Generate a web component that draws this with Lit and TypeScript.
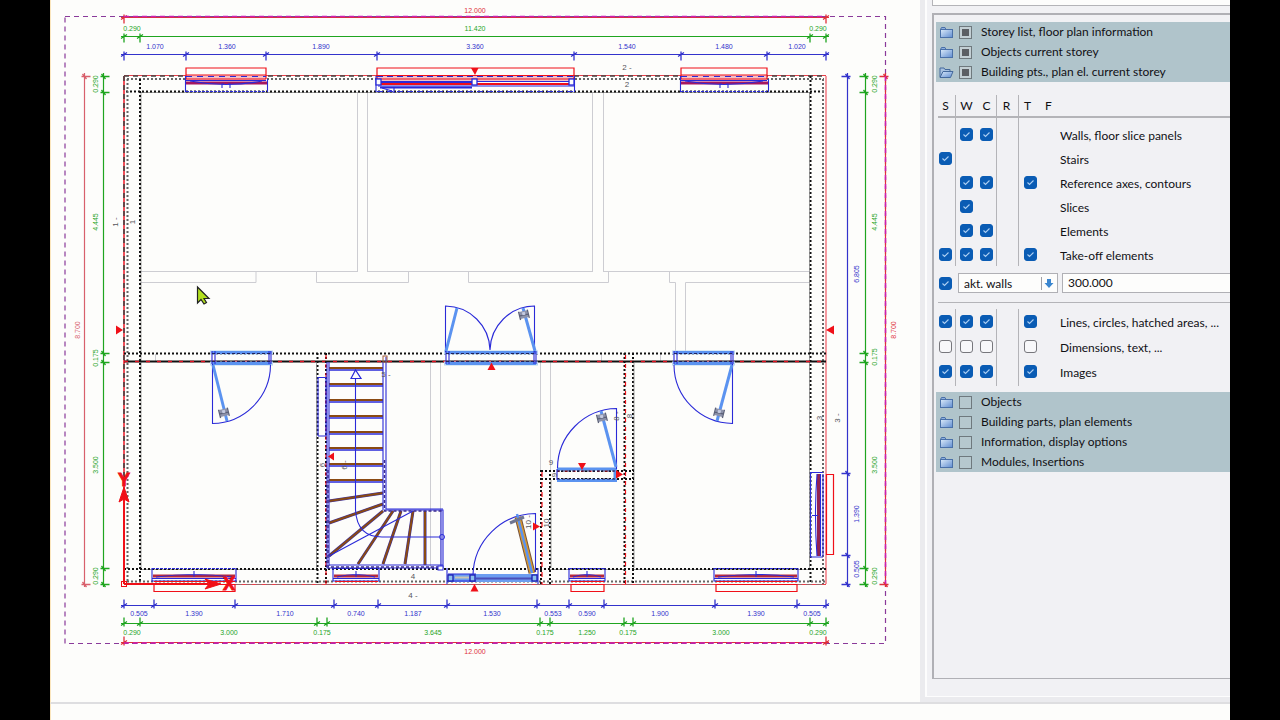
import { LitElement, html, svg, css, nothing } from "lit";
import { customElement } from "lit/decorators.js";

const GREEN = "#1fa51f";
const BLUE = "#3333cc";
const RED = "#e0303a";

type Label = [string, number, number];
interface DimChain {
  axis: "h" | "v";
  at: number;
  color: string;
  ticks: number[];
  side: number;
  labels: Label[];
}

const chains: DimChain[] = [
  { axis: "h", at: 17, color: RED, ticks: [124, 826], side: 1, labels: [["12.000", 475, 10]] },
  { axis: "h", at: 36, color: GREEN, ticks: [124, 140, 810, 826], side: 1,
    labels: [["0.290", 132, 28], ["11.420", 475, 28], ["0.290", 818, 28]] },
  { axis: "h", at: 54, color: BLUE, ticks: [124, 186, 266, 377, 574, 681, 767, 826], side: 1,
    labels: [["1.070", 155, 46], ["1.360", 227, 46], ["1.890", 321, 46], ["3.360", 475, 46],
      ["1.540", 627, 46], ["1.480", 724, 46], ["1.020", 797, 46]] },
  { axis: "h", at: 605, color: BLUE, side: -1,
    ticks: [124, 154, 235, 334, 378, 447, 537, 569, 604, 715, 797, 826],
    labels: [["0.505", 139, 613], ["1.390", 194, 613], ["1.710", 285, 613], ["0.740", 356, 613],
      ["1.187", 413, 613], ["1.530", 492, 613], ["0.553", 553, 613], ["0.590", 587, 613],
      ["1.900", 660, 613], ["1.390", 756, 613], ["0.505", 812, 613]] },
  { axis: "h", at: 623, color: GREEN, side: -1,
    ticks: [124, 140, 317, 327, 540, 550, 624, 633, 810, 826],
    labels: [["0.290", 132, 632], ["3.000", 229, 632], ["0.175", 322, 632], ["3.645", 433, 632],
      ["0.175", 545, 632], ["1.250", 587, 632], ["0.175", 628, 632], ["3.000", 721, 632], ["0.290", 818, 632]] },
  { axis: "h", at: 642, color: RED, ticks: [124, 826], side: -1, labels: [["12.000", 475, 651]] },
  { axis: "v", at: 84, color: "#d8606c", ticks: [76, 584], side: 1, labels: [["8.700", 77, 330]] },
  { axis: "v", at: 103, color: GREEN, ticks: [76, 92, 353, 362, 568, 584], side: 1,
    labels: [["0.290", 95, 84], ["4.445", 95, 222], ["0.175", 95, 358], ["3.500", 95, 465], ["0.290", 95, 576]] },
  { axis: "v", at: 847, color: BLUE, ticks: [76, 473, 555, 584], side: -1,
    labels: [["6.805", 856, 274], ["1.390", 856, 514], ["0.505", 856, 569]] },
  { axis: "v", at: 865, color: GREEN, ticks: [76, 92, 353, 362, 568, 584], side: -1,
    labels: [["0.290", 874, 84], ["4.445", 874, 222], ["0.175", 874, 357], ["3.500", 874, 465], ["0.290", 874, 576]] },
  { axis: "v", at: 885, color: RED, ticks: [76, 584], side: -1, labels: [["8.700", 893, 330]] },
];

const tags: [string, number, number, boolean][] = [
  ["1 -", 115, 222, true], ["1", 132, 222, true], ["2 -", 627, 67, false], ["2", 627, 84, false],
  ["3", 819, 418, true], ["3 -", 837, 418, true], ["4", 413, 576, false], ["4 -", 413, 595, false],
  ["5 -", 386, 374, false], ["6 -", 344, 465, true], ["6", 322, 465, true], ["8 -", 616, 416, true],
  ["8", 629, 416, true], ["9", 551, 462, false], ["9", 554, 475, true], ["10 -", 528, 522, true],
  ["10", 546, 523, true],
];

@customElement("floor-plan")
export class FloorPlan extends LitElement {
  static styles = css`
    :host { display: block; flex: 1; min-width: 0; }
    svg { display: block; width: 100%; height: 100%; }
    text {
      font-family: "Liberation Sans Narrow", "Liberation Sans", Arial, sans-serif;
      font-size: 7px;
      text-anchor: middle;
      dominant-baseline: central;
    }
    .tag { font-size: 8px; fill: #55555c; }
    .axis { font-size: 18px; font-weight: bold; fill: #f01018; stroke: #f01018; stroke-width: 1; }
    .l { fill: none; stroke-width: 1; }
    .dot { fill: none; stroke: #111; stroke-width: 2; stroke-dasharray: 2 2; }
    .dotg { fill: none; stroke: #666; stroke-width: 2; stroke-dasharray: 2 2; }
    .thin { fill: none; stroke: #777; stroke-width: 0.7; }
    .red { fill: none; stroke: #e8404a; stroke-width: 1.2; }
    .redwide { fill: none; stroke: #f0505a; stroke-width: 2; }
    .redlight { fill: none; stroke: #f59aa0; stroke-width: 2; }
    .redstrong { fill: none; stroke: #f01018; stroke-width: 1.2; }
    .dash { fill: none; stroke: #444; stroke-width: 1.6; stroke-dasharray: 5 4; }
    .aux { fill: none; stroke: #cdcdd2; stroke-width: 1; }
    .blue { fill: none; stroke: #2a2ad8; stroke-width: 1.1; }
    .bluewide { fill: none; stroke: #2a2ad8; stroke-width: 2; }
    .sel { fill: none; stroke: #5b93f0; stroke-width: 3; }
    .mark { fill: #f01018; }
  `;

  private chain(c: DimChain) {
    const a = c.ticks[0];
    const b = c.ticks[c.ticks.length - 1];
    const p = c.at + 0.5;
    const h = c.axis === "h";
    const s = c.side;
    return svg`<g stroke=${c.color} class="l">
      <path d=${h ? `M${a - 3} ${p}H${b + 3}` : `M${p} ${a - 3}V${b + 3}`} stroke-width="1.2"/>
      ${c.ticks.map((t) => svg`<path stroke-width="1.3" d=${h
        ? `M${t} ${p - 3 * s}V${p + 6 * s}M${t - 3} ${p + 2}L${t + 3} ${p - 2}`
        : `M${p - 3 * s} ${t + 0.5}H${p + 6 * s}M${p - 2} ${t - 2}L${p + 2} ${t + 3}`}/>`)}
    </g>
    ${c.labels.map(([t, x, y]) => svg`<text fill=${c.color} x=${x} y=${y}
      transform=${h ? nothing : `rotate(-90 ${x} ${y})`}>${t}</text>`)}`;
  }

  private topWindow(a: number, b: number) {
    const m = (a + b) / 2;
    return svg`
      <rect x=${a} y="75" width=${b - a} height="6" fill="#f3c0c8"/>
      <path class="redstrong" d="M${a} 79V68H${b}V79M${a} 75H${b}M${a} 79H${b}"/>
      <path class="blue" d="M${a - 0.5} 76V92M${b + 1.5} 79V92M${a} 80.500H${b}"/>
      <path class="blue" stroke-dasharray="3 1" d="M${a} 91.500H${b}"/>
      <path d="M${a} 83H${b + 1}" stroke="#a51660" stroke-width="3"/>
      <path class="blue" d="M${a + 4} 81Q${m} 88 ${b - 4} 81"/>
      <path class="blue" d="M${m - 4} 88V84H${m - 2}M${m + 4} 88V84H${m + 2}"/>
      <path class="blue" d="M${a} 76.500H${b}" stroke-dasharray="6 5"/>`;
  }

  private bottomWindow(a: number, b: number, sill = true) {
    const m = (a + b) / 2;
    return svg`
      <path class="blue" stroke-dasharray="3 1" d="M${a} 568.500H${b}"/>
      <path class="blue" d="M${a} 568V581H${b}V568"/>
      <path d="M${a + 1} 576H${b - 1}" stroke="#b8283c" stroke-width="3"/>
      <path class="blue" d="M${a} 578.500H${b}M${a + 4} 577Q${m} 572 ${b - 4} 577M${m} 571V577"/>
      <path class="redstrong" d="M${a + 2} 581.500H${b - 1}"/>
      ${sill ? svg`<path class="redstrong" d="M${a + 2} 584.500V591.500H${b - 1}V584.500Z"/>` : nothing}`;
  }

  private handle(x: number, y: number, angle: number) {
    return svg`<g transform="translate(${x} ${y}) rotate(${angle})">
      <rect x="-4" y="-4" width="8" height="7" fill="#8d93ab"/>
      <path d="M-4.500 -4.500V4M4.500 -4.500V4M-4 0H4" stroke="#5c6178" stroke-width="1.300"/>
      <rect x="-1.500" y="-3" width="3" height="3" fill="#c5cbe0"/>
    </g>`;
  }

  private frame(x: number, w: number) {
    return svg`
      <path d="M${x - 2} 352.500H${x + w + 2}M${x - 2} 363.500H${x + w + 2}" stroke="#b9d7f0" stroke-width="4"/>
      <path class="sel" d="M${x} 352.500H${x + w}M${x} 363.500H${x + w}"/>
      <path class="blue" d="M${x} 351V364M${x + 3} 351V364M${x + w} 351V364M${x + w - 2} 351V364"/>
      <path d="M${x} 353.500H${x + w}M${x} 361.500H${x + w}" stroke="#22225c" stroke-width="1" stroke-dasharray="3 2"/>`;
  }

  private walls() {
    return svg`
      <path class="aux" d="M357.500 93V272M367.500 93V272M592.500 93V272M603.500 93V272
        M140 271.500H357.500M367.500 271.500H592.500M603.500 271.500H810
        M140 282.500H256V272M316.500 272V282.500H408.500V272M468.500 272V282.500H608.500V272
        M669.500 272V282.500H675.500V353M810 282.500H685.500V353
        M430.500 362V568M440.500 362V568M540.500 362V470M550.500 362V470M155.500 354V362M601.500 354V362M660.500 354V362"/>

      <path class="red" d="M124 75.500H826"/><path class="dash" d="M124 76H826"/>
      <path class="dotg" d="M127 79H824"/>
      <path class="thin" d="M140 92.500H810"/><path class="dot" d="M126 91.500H826"/>

      <path class="redwide" d="M124 76V584"/><path class="dash" d="M124 76V500"/>
      <path class="dotg" d="M127.500 79V582"/>
      <path class="thin" d="M141 92V568"/><path class="dot" d="M140 79V584"/>

      <path class="redlight" d="M826 76V584"/>
      <path class="dotg" d="M823 79V584"/><path class="dot" d="M810.500 76V584"/>
      <path class="thin" d="M809.500 92V568"/>

      <path class="thin" d="M140 569.500H317M550 569.500H624M633 569.500H810"/><path class="dot" d="M124 569H826"/>
      <path class="dotg" d="M127 581.500H826"/>
      <path class="red" d="M124 584.500H826"/><path class="thin" stroke-dasharray="6 4" d="M236 584.500H826"/>

      <path class="dot" d="M124 353.500H826"/>
      <path d="M124 361.500H826" stroke="#111" stroke-width="2"/>
      <path d="M124 361.500H826" stroke="#e01020" stroke-width="1.400" stroke-dasharray="4 7"/>

      <path class="dot" d="M317.500 353V584"/><path class="thin" d="M316.500 362V568"/>
      <path class="dot" d="M326 353V584"/><path class="redstrong" stroke-dasharray="4 5" d="M326 355V584"/>
      <path class="dot" d="M624.500 353V584"/><path class="redstrong" stroke-dasharray="4 5" d="M625.500 355V584"/>
      <path class="dot" d="M633 353V584"/><path class="thin" d="M634 362V568"/>
      <path class="dot" d="M541 470V584"/><path class="redstrong" stroke-dasharray="5 5" d="M542 472V584"/>
      <path class="dot" d="M550 470V584M541 471H634M541 479H634"/><path class="thin" d="M551 480V568"/>
      <path class="redstrong" stroke-dasharray="3 5" d="M557 471H616"/>
      <path class="blue" d="M318 377.500H326M318 436H326M318 377V436M326 377V436"/>`;
  }

  private windows() {
    return svg`
      ${this.topWindow(186, 266)}
      ${this.topWindow(681, 767)}
      <rect x="377" y="75" width="197" height="6" fill="#f3c0c8"/>
      <path class="redstrong" d="M377 79V68H574V79M377 75.500H574M377 79H574"/>
      <path class="blue" d="M376 76V92M574.500 76V92M378 81.500H574M378 86H574"/>
      <path d="M380 84H570" stroke="#f01018" stroke-width="2"/>
      <path class="bluewide" d="M380 82H472M380 87.500H472"/>
      <path class="blue" d="M382 88L392 91M394 88V93"/>
      <path class="blue" stroke-dasharray="6 4" d="M377 91.500H574M377 76.500H574"/>
      <g fill="#fdfdfb" stroke="#2a2ad8" stroke-width="1.300">
        <rect x="376" y="79" width="5" height="6"/><rect x="472" y="79" width="5" height="6"/><rect x="569" y="79" width="5" height="6"/>
      </g>
      ${this.bottomWindow(152, 236)}
      ${this.bottomWindow(333, 379, false)}
      ${this.bottomWindow(569, 605)}
      ${this.bottomWindow(714, 798)}
      <path class="blue" d="M823 472.500H810.500V557H823"/>
      <path d="M818.500 474V556" stroke="#94224e" stroke-width="3"/>
      <path class="blue" d="M817 474Q814 515 817 556M820.500 474V556M812 515.500H818M823 474V556"/>
      <path class="redstrong" d="M826.500 474.500H833.500V554.500H826.500Z"/>`;
  }

  private stairs() {
    const treads = [369, 385, 401, 417, 433, 449, 465, 481];
    const winders = [
      [329, 501, 383, 493], [329, 523, 383, 504], [329, 556, 383, 511], [358, 564, 393, 511],
      [383, 564, 401, 511], [405, 564, 413, 511], [425, 565, 425, 511],
    ];
    return svg`
      ${treads.map((y) => svg`
        <path d="M329 ${y - 1}H383" stroke="#8a4a12" stroke-width="2"/>
        <path d="M329 ${y + 1}H383" stroke="#2a2ad8" stroke-width="1.300"/>`)}
      ${winders.map(([a, b, c, d]) => svg`
        <path d="M${a} ${b}L${c} ${d}" stroke="#3b2fa0" stroke-width="3"/>
        <path d="M${a} ${b}L${c} ${d}" stroke="#8a4a12" stroke-width="2"/>`)}
      <path class="blue" d="M329 362V566M327 362V568H443V510H384"/>
      <path class="blue" d="M329 565H443M441 510V566M383 362V510M386 357V509H443"/>
      <path d="M384.500 460V511H443M328 470V567H443" fill="none" stroke="#3a2a90" stroke-width="1.500" stroke-dasharray="3 2"/>
      <rect x="383" y="356" width="4" height="6" fill="none" stroke="#a05a3c"/>
      <path class="blue" d="M355.500 378V510Q357 537 382 537H439M329 556L413 511"/>
      <path d="M351 378.500L355.500 370L361 378.500Z" fill="#fdfdfb" stroke="#2a2ad8" stroke-width="1.200"/>
      <circle cx="442" cy="537" r="2.500" fill="none" stroke="#2a2ad8"/>
      <rect x="438" y="566" width="5" height="4" fill="#fdfdfb" stroke="#2a2ad8"/>`;
  }

  private doors() {
    return svg`
      ${this.frame(212, 59)}
      <path class="blue" d="M212.500 364V423.500A59 59 0 0 0 270.500 365"/>
      <path class="sel" d="M213 365L227 421"/>${this.handle(224, 413, -14)}
      ${this.frame(674, 59)}
      <path class="blue" d="M732.500 364V423.500A59 59 0 0 1 674 365"/>
      <path class="sel" d="M732 365L717 421"/>${this.handle(719, 413, 14)}
      ${this.frame(446, 90)}
      <path class="blue" d="M445.500 352V306A45 45 0 0 1 490 350A45 45 0 0 1 534.500 306V352"/>
      <path class="sel" d="M446 351L457 308M535 351L523 308"/>${this.handle(524, 315, -14)}
      <path class="sel" d="M557 469H617M557 480.500H617M615 469V481"/>
      <path d="M557 471H616M557 479H616" stroke="#22225c" stroke-width="1" stroke-dasharray="3 2"/>
      <path class="blue" d="M557 469V480M616.500 469V408.500A60 60 0 0 0 557.500 468"/>
      <path class="sel" d="M616 467L601 411"/>${this.handle(602, 418, -14)}
      <rect x="448" y="574" width="90" height="8" fill="#6c9df0"/>
      <path d="M476 578.500H532" stroke="#4a4fb8" stroke-width="2"/>
      <path d="M455 577.500H469" stroke="#c9c6b5" stroke-width="2"/>
      <path class="blue" d="M447 568V584M538 568V584M448 574H476M448 581H476"/>
      <g fill="#8cc0ee" stroke="#1c1cb0" stroke-width="1.300">
        <rect x="448" y="575" width="5" height="6"/><rect x="470" y="575" width="5" height="6"/><rect x="532" y="575" width="5" height="6"/>
      </g>
      <path class="blue" d="M535.500 572V513.500A63 63 0 0 0 473 575"/>
      <path d="M518 517L532 573" stroke="#75513c" stroke-width="7"/>
      <path d="M518 517L532 573" stroke="#d9982c" stroke-width="5"/>
      <path d="M517 514L532 573" stroke="#5b93f0" stroke-width="2.500"/>
      <path d="M510 523L524 517" stroke="#6f7590" stroke-width="3"/>`;
  }

  render() {
    return html`<svg viewBox="51 0 869 702" preserveAspectRatio="xMinYMin meet" role="img" aria-label="Floor plan">
      <path d="M65 16.500H885.500V643.500H65Z" fill="none" stroke="#8a3a9a" stroke-width="1.200" stroke-dasharray="5 4"/>
      ${chains.map((c) => this.chain(c))}
      <path d="M124 16.500H826M124 643H826M885.500 76V584" fill="none" stroke="#cc1fb0" stroke-width="1.500" stroke-dasharray="5 4"/>
      ${this.walls()} ${this.windows()} ${this.stairs()} ${this.doors()}
      <g class="mark">
        <path d="M116 325.500L123 330L116 334.500Z"/><path d="M834 325.500L826 330L834 334.500Z"/>
        <path d="M471 68L478.500 68L475 75Z"/><path d="M487.500 370L495.500 370L491.500 362.500Z"/>
        <path d="M334 452.500V460.500L328 456.500Z"/><path d="M578 463H586L582 470Z"/>
        <path d="M616 470V478.500L623 474.500Z"/><path d="M533 522.500V530.500L540 526.500Z"/>
        <path d="M470.500 591.500H478.500L474.500 584Z"/>
      </g>
      ${tags.map(([t, x, y, r]) => svg`<text class="tag" x=${x} y=${y}
        transform=${r ? `rotate(-90 ${x} ${y})` : nothing}>${t}</text>`)}
      <g stroke="#f01018" fill="#f01018">
        <path d="M124 584V498" stroke-width="2"/><path d="M124 584H208" stroke-width="2"/>
        <path d="M124 487L129 502L124 499L119 502Z"/><path d="M221 584L205 579L209 584L205 589Z"/>
        <rect x="121.500" y="581.500" width="5" height="5" fill="none"/>
      </g>
      <text class="axis" x="124" y="480">Y</text>
      <text class="axis" x="229" y="584">X</text>
      <path d="M197.500 287V303L201 299.500L204 304L206.500 302.500L204 298.500L209 298.500Z" fill="#b2e01e" stroke="#222" stroke-width="1.200"/>
    </svg>`;
  }
}

interface LayerRow { label: string; cols: string; on: boolean; }
const upper: LayerRow[] = [
  { label: "Walls, floor slice panels", cols: "WC", on: true },
  { label: "Stairs", cols: "S", on: true },
  { label: "Reference axes, contours", cols: "WCT", on: true },
  { label: "Slices", cols: "W", on: true },
  { label: "Elements", cols: "WC", on: true },
  { label: "Take-off elements", cols: "SWCT", on: true },
];
const lower: LayerRow[] = [
  { label: "Lines, circles, hatched areas, ...", cols: "SWCT", on: true },
  { label: "Dimensions, text, ...", cols: "SWCT", on: false },
  { label: "Images", cols: "SWCT", on: true },
];

@customElement("layer-panel")
export class LayerPanel extends LitElement {
  static styles = css`
    :host {
      display: flex;
      flex: none;
      box-sizing: border-box;
      width: 310px;
      padding: 0 0 5px 5px;
      background: #ebebee;
      color: #101014;
      font: 12px/20px Lato, "Open Sans", sans-serif;
    }
    .body {
      flex: 1;
      min-width: 0;
      display: flex;
      flex-direction: column;
      background: #f1f1f4;
      border-left: 2px solid #fdfdfd;
      border-bottom: 1px solid #fdfdfd;
      padding-left: 5px;
    }
    .prev { height: 5px; background: #fdfdfc; border: solid #b4b4b8; border-width: 0 0 1px 1px; }
    .box {
      flex: 1;
      margin: 7px 0 17px;
      border: solid #b0b0b5;
      border-width: 2px 0 1px 2px;
      padding: 7px 0 0 2px;
    }
    .group { background: #b0c4cb; }
    .head { display: flex; align-items: center; height: 20px; padding-left: 3px; }
    .head svg { width: 15px; height: 13px; margin-right: 5px; }
    .head label { margin-left: 9px; white-space: nowrap; }
    input, select { font: inherit; color: inherit; margin: 0; border-radius: 0; }
    .check {
      appearance: none;
      flex: none;
      width: 13px;
      height: 13px;
      border: 1px solid #77777c;
      border-radius: 3px;
      background: #f8f8fa;
    }
    .check:checked {
      border-color: #0a5cb4;
      background: #0a5cb4 url("data:image/svg+xml,%3Csvg xmlns='http://www.w3.org/2000/svg' viewBox='0 0 11 11'%3E%3Cpath d='M2.500 5.500l2 2 4-4' fill='none' stroke='%23a9cdf2' stroke-width='1.100'/%3E%3C/svg%3E") center / 11px 11px no-repeat;
    }
    .tri {
      appearance: none;
      flex: none;
      width: 13px;
      height: 13px;
      border: 1px solid #6f797e;
      background: #b6c8ce;
    }
    .tri:indeterminate { background: #5c5f64; border-color: #6f797e; box-shadow: inset 0 0 0 2px #c3cfd4; }
    .matrix {
      --rule: linear-gradient(#b4b4b8, #b4b4b8);
      margin-left: 2px;
      background:
        var(--rule) 17px 0 / 1px 100% no-repeat,
        var(--rule) 58px 0 / 1px 100% no-repeat,
        var(--rule) 80px 0 / 1px 100% no-repeat;
    }
    .first { margin-top: 13px; }
    .second { margin-top: 6px; padding-bottom: 2px; }
    .row {
      display: grid;
      grid-template-columns: 21px 20px 20px 24px 21px 15px 1fr;
      align-items: center;
      height: 24px;
      padding-left: 1px;
    }
    .second .row { height: 25px; }
    .row label { padding-top: 3px; white-space: nowrap; }
    .titles { border-bottom: 2px solid #b4b4b8; height: 21px; margin-bottom: 4px; }
    .titles span { width: 13px; text-align: center; }
    .titles span:nth-child(n + 5) { text-align: left; }
    .value {
      display: flex;
      align-items: center;
      margin: 7px 0 0 2px;
      padding: 0 0 9px 1px;
      border-bottom: 1px solid #b4b4b8;
    }
    .pick { position: relative; display: flex; margin: 0 4px 0 6px; }
    .pick select {
      appearance: none;
      width: 100px;
      height: 20px;
      padding: 0 20px 0 5px;
      border: 1px solid #b0b0b5;
      background: #fdfdfc;
    }
    .pick svg { position: absolute; right: 4px; top: 4px; width: 14px; height: 13px; pointer-events: none; }
    .num {
      box-sizing: border-box;
      flex: 1;
      min-width: 0;
      height: 20px;
      padding: 0 5px;
      border: 1px solid #b0b0b5;
      border-right: 0;
      background: #fdfdfc;
    }
    .lower { margin-top: 6px; }
  `;

  private folder(open = false) {
    return html`<svg viewBox="0 0 15 13" aria-hidden="true">
      <defs><linearGradient id="g" x1="0" y1="0" x2="1" y2="1">
        <stop offset="0" stop-color="#dcebfa"/><stop offset="1" stop-color="#5f8cd0"/></linearGradient></defs>
      ${open
        ? svg`<path d="M1 11V2H5L6 3.500H11V5.500" fill="#a9c2e0" stroke="#44699c"/><path d="M1 11.500L4 5.500H14L11.500 11.500Z" fill="url(#g)" stroke="#44699c"/>`
        : svg`<path d="M1.500 11.500V3.500L2.500 1.500H6L7 3.500" fill="#8fb0dd" stroke="#4a70a8"/><rect x="1.500" y="3.500" width="12" height="8" fill="url(#g)" stroke="#4a70a8"/>`}
    </svg>`;
  }

  private head(label: string, id: string, mixed: boolean, open = false) {
    return html`<div class="head">${this.folder(open)}
      <input class="tri" type="checkbox" id=${id} .indeterminate=${mixed} />
      <label for=${id}>${label}</label></div>`;
  }

  private row(r: LayerRow, key: string) {
    const first = r.cols[0];
    return html`<div class="row">
      ${["S", "W", "C", "R", "T", "F"].map((c) => r.cols.includes(c)
        ? html`<input class="check" type="checkbox" id=${key + c} aria-label="${r.label} ${c}" .checked=${r.on} />`
        : html`<span></span>`)}
      <label for=${key + first}>${r.label}</label></div>`;
  }

  render() {
    return html`<div class="body">
      <div class="prev"></div>
      <div class="box">
        <div class="group">
          ${this.head("Storey list, floor plan information", "g1", true)}
          ${this.head("Objects current storey", "g2", true)}
          ${this.head("Building pts., plan el. current storey", "g3", true, true)}
        </div>
        <div class="matrix first">
          <div class="row titles">${["S", "W", "C", "R", "T", "F"].map((c) => html`<span>${c}</span>`)}</div>
          ${upper.map((r, i) => this.row(r, `u${i}`))}
        </div>
        <div class="value">
          <input class="check" type="checkbox" aria-label="Use value" .checked=${true} />
          <span class="pick">
            <select aria-label="Value for"><option>akt. walls</option></select>
            <svg viewBox="0 0 14 13" aria-hidden="true"><path d="M1.500 0V13" stroke="#a0a0a6"/>
              <path d="M7 2H11V6H13.500L9 11L4.500 6H7Z" fill="#3b86cf"/></svg>
          </span>
          <input class="num" type="text" aria-label="Value" value="300.000" />
        </div>
        <div class="matrix second">${lower.map((r, i) => this.row(r, `l${i}`))}</div>
        <div class="group lower">
          ${this.head("Objects", "g4", false)}
          ${this.head("Building parts, plan elements", "g5", false)}
          ${this.head("Information, display options", "g6", false)}
          ${this.head("Modules, Insertions", "g7", false)}
        </div>
      </div>
    </div>`;
  }
}

@customElement("app-root")
export class AppRoot extends LitElement {
  static styles = css`
    :host {
      display: flex;
      flex-direction: column;
      box-sizing: border-box;
      height: 100vh;
      padding: 0 50px;
      background: #000;
      overflow: hidden;
    }
    .work {
      flex: 1;
      min-height: 0;
      display: flex;
      background: #fdfdfb;
      border-left: 1px solid #fbe6bd;
      border-bottom: 2px solid #dedee0;
    }
    .status { height: 16px; background: #fdfdfb; border-left: 1px solid #fbe6bd; }
  `;

  render() {
    return html`<div class="work"><floor-plan></floor-plan><layer-panel></layer-panel></div>
      <div class="status"></div>`;
  }
}
